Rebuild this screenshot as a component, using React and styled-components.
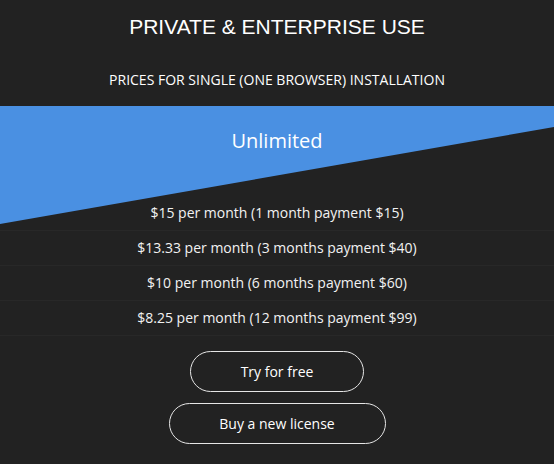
import styled, { createGlobalStyle } from 'styled-components'

const GlobalStyle = createGlobalStyle`
  html, body {
    margin: 0;
    padding: 0;
    background: #222222;
  }
  body {
    font-family: "Open Sans", "Liberation Sans", sans-serif;
    color: #ffffff;
  }
`;

const prices = [
  '$15 per month (1 month payment $15)',
  '$13.33 per month (3 months payment $40)',
  '$10 per month (6 months payment $60)',
  '$8.25 per month (12 months payment $99)',
];

function App() {
  return (
    <>
      <GlobalStyle />
      <Page>
        <Header>
          <Title>PRIVATE &amp; ENTERPRISE USE</Title>
          <Subtitle>PRICES FOR SINGLE (ONE BROWSER) INSTALLATION</Subtitle>
        </Header>
        <Plan>
          <PlanName>Unlimited</PlanName>
          <PriceList>
            {prices.map((p) => (
              <PriceRow key={p}>{p}</PriceRow>
            ))}
          </PriceList>
          <Actions>
            <Button $width={174}>Try for free</Button>
            <Button $width={217}>Buy a new license</Button>
          </Actions>
        </Plan>
      </Page>
    </>
  )
}

export default App;

const Page = styled.div`
  width: 554px;
  min-height: 464px;
  background: #222222;
`;

const Header = styled.header`
  padding: 15px 0 16px;
  text-align: center;
`;

const Title = styled.h1`
  margin: 0;
  font-family: "Liberation Sans", Arial, sans-serif;
  font-weight: normal;
  font-size: 21px;
  line-height: 24px;
  color: #ffffff;
`;

const Subtitle = styled.h2`
  margin: 31px 0 0;
  font-family: "Open Sans", sans-serif;
  font-weight: normal;
  font-size: 14px;
  line-height: 20px;
  color: #ffffff;
`;

const Plan = styled.section`
  position: relative;
  padding-top: 21px;
  text-align: center;

  &::before {
    content: '';
    position: absolute;
    top: 0;
    left: 0;
    right: 0;
    height: 118px;
    background: #4a90e2;
    clip-path: polygon(0 0, 100% 0, 100% 21px, 0 100%);
  }
`;

const PlanName = styled.div`
  position: relative;
  font-size: 20px;
  line-height: 27px;
  color: #ffffff;
  margin-bottom: 42px;
`;

const PriceList = styled.ul`
  position: relative;
  list-style: none;
  margin: 0;
  padding: 0;
`;

const PriceRow = styled.li`
  height: 34px;
  line-height: 34px;
  font-size: 14px;
  color: #f2f2f2;
  border-bottom: 1px solid #282828;
`;

const Actions = styled.div`
  display: flex;
  flex-direction: column;
  align-items: center;
  gap: 11px;
  padding-top: 15px;
`;

const Button = styled.button`
  width: ${(p) => p.$width}px;
  height: 41px;
  border: 1px solid #e6e6e6;
  border-radius: 21px;
  background: transparent;
  color: #ffffff;
  font-family: "Open Sans", sans-serif;
  font-size: 14px;
  cursor: pointer;
`;
